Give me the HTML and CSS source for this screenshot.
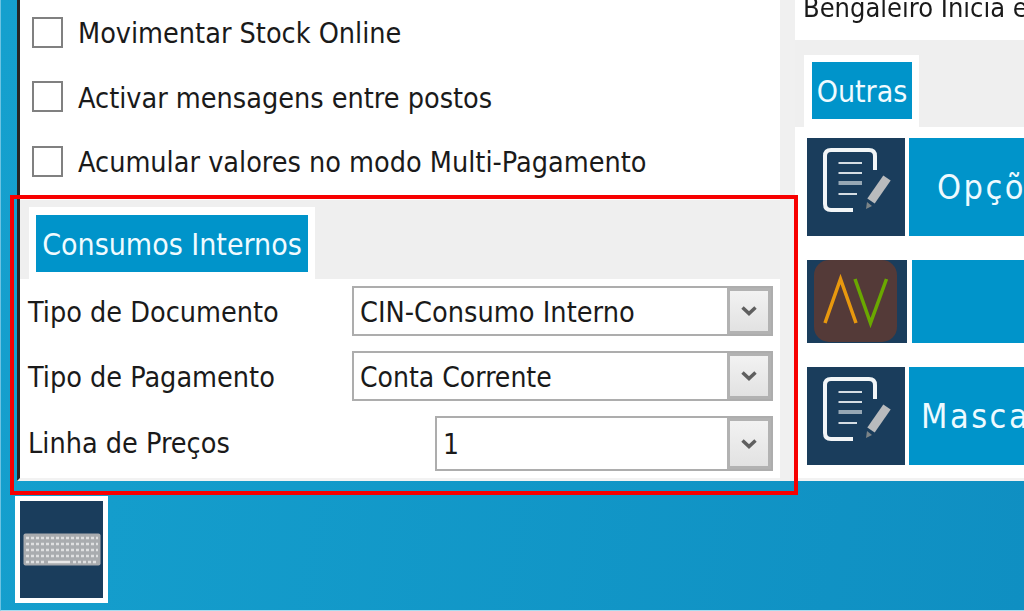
FILE: index.html
```html
<!DOCTYPE html>
<html lang="pt">
<head>
<meta charset="utf-8">
<title>Consumos Internos</title>
<link rel="stylesheet" href="styles.css">
</head>
<body>
<div class="stage">
  <div class="main">
    <section class="left">
      <div class="checks">
        <label class="check"><span class="box"></span><span class="check-text">Movimentar Stock Online</span></label>
        <label class="check"><span class="box"></span><span class="check-text">Activar mensagens entre postos</span></label>
        <label class="check"><span class="box"></span><span class="check-text">Acumular valores no modo Multi-Pagamento</span></label>
      </div>
      <div class="tabbar tabbar-left">
        <div class="tab"><span class="tab-label">Consumos Internos</span></div>
      </div>
      <div class="form">
        <div class="form-row row-1">
          <span class="field-label">Tipo de Documento</span>
          <div class="select"><span class="select-value value-doc">CIN-Consumo Interno</span><span class="select-btn"><svg width="18" height="12" viewBox="0 0 18 12"><path d="M2.500 2.500 9 8.500 15.500 2.500" fill="none" stroke="#5f5f5f" stroke-width="3.500"/></svg></span></div>
        </div>
        <div class="form-row row-2">
          <span class="field-label">Tipo de Pagamento</span>
          <div class="select"><span class="select-value">Conta Corrente</span><span class="select-btn"><svg width="18" height="12" viewBox="0 0 18 12"><path d="M2.500 2.500 9 8.500 15.500 2.500" fill="none" stroke="#5f5f5f" stroke-width="3.500"/></svg></span></div>
        </div>
        <div class="form-row row-3">
          <span class="field-label">Linha de Preços</span>
          <div class="select select-short"><span class="select-value">1</span><span class="select-btn"><svg width="18" height="12" viewBox="0 0 18 12"><path d="M2.500 2.500 9 8.500 15.500 2.500" fill="none" stroke="#5f5f5f" stroke-width="3.500"/></svg></span></div>
        </div>
      </div>
    </section>
    <div class="gutter"></div>
    <section class="right">
      <div class="top-note"><span>Bengaleiro Inicia e</span></div>
      <div class="tabbar tabbar-right">
        <div class="tab"><span class="tab-label">Outras</span></div>
      </div>
      <div class="actions">
        <div class="action action-1">
          <span class="tile"><svg width="98" height="98" viewBox="0 0 98 98"><use href="#doc"/></svg></span>
          <span class="action-btn"><span class="action-text text-1">Opções</span></span>
        </div>
        <div class="action action-2">
          <span class="tile tile-av">
            <svg width="100" height="83" viewBox="0 0 100 83">
              <rect x="7" y="0" width="83" height="82" rx="15" fill="#543a38"/>
              <path d="M18 63 33.500 19 49 63" fill="none" stroke="#e8980e" stroke-width="3.500"/>
              <path d="M48 19 63.500 63 79.500 19" fill="none" stroke="#6aa800" stroke-width="3.500"/>
            </svg>
          </span>
          <span class="action-btn"></span>
        </div>
        <div class="action action-3">
          <span class="tile"><svg width="98" height="98" viewBox="0 0 98 98"><use href="#doc"/></svg></span>
          <span class="action-btn"><span class="action-text text-3">Mascaras</span></span>
        </div>
      </div>
    </section>
  </div>
  <div class="footer">
    <div class="kbd-btn">
      <svg width="78" height="33" viewBox="0 0 78 33">
        <rect x="0.500" y="0.500" width="77" height="32" rx="2" fill="#a9acaf"/>
        <g fill="none" stroke="#dfe0e1" stroke-width="2.500" stroke-dasharray="3 2">
          <path d="M3 5H75"/><path d="M3 11H75"/><path d="M3 17H75"/><path d="M3 23H75"/>
          <path d="M3 29H22"/><path d="M50 29H75"/>
        </g>
        <path d="M25 29H47" stroke="#e8e8e8" stroke-width="2.500"/>
      </svg>
    </div>
  </div>
</div>
<div class="highlight"></div>
<svg class="defs" width="0" height="0" aria-hidden="true">
  <defs>
    <g id="doc">
      <path d="M46 72H24Q18 72 18 66V18Q18 12 24 12H62Q68 12 68 18V32" fill="none" stroke="#f2f5f7" stroke-width="4"/>
      <path d="M31.500 25H55M31.500 35H55M31.500 56H50" fill="none" stroke="#d5dde3" stroke-width="2"/>
      <path d="M31.500 45H55" fill="none" stroke="#97a8b5" stroke-width="4"/>
      <path d="M80 40 64 63" fill="none" stroke="#b9bbbd" stroke-width="9"/>
      <path d="M60 64 59 71 65 68Z" fill="#7c8487"/>
    </g>
  </defs>
</svg>
</body>
</html>
```

FILE: styles.css
```css
* { box-sizing: border-box; }
html, body { margin: 0; padding: 0; }
body {
  width: 1024px;
  height: 611px;
  overflow: hidden;
  position: relative;
  font-family: "DejaVu Sans Condensed", "Noto Sans", sans-serif;
  font-size: 28px;
  color: #1a1a1a;
  background: linear-gradient(100deg, #15a0ce 0%, #0f8fc2 100%);
  border-left: 1px solid #6cc3e2;
  border-bottom: 1px solid #a8dcef;
}
.stage { display: flex; flex-direction: column; height: 610px; margin-left: -1px; filter: blur(0.45px); }
.main { display: flex; height: 481px; padding-left: 17px; }
.left { width: 763px; height: 100%; background: #fff; border-left: 3px solid #262626; border-bottom: 3px solid #f2f2f2; display: flex; flex-direction: column; }
.checks { height: 200px; padding: 0 0 0 12px; display: flex; flex-direction: column; }
.check { height: 64.500px; display: flex; align-items: center; gap: 15px; white-space: nowrap; }
.check-text { font-size: 28.500px; padding-top: 3px; }
.box { width: 31px; height: 31px; border: 2px solid #808080; background: #fff; flex: none; }
.tabbar { background: #efefef; display: flex; align-items: flex-end; }
.tabbar-left { height: 79px; padding-left: 9px; }
.tab { background: #fff; }
.tabbar-left .tab { padding: 8px 7px 7px; }
.tab-label { display: block; background: #0094ca; color: #f0fbff; text-align: center; font-size: 30px; }
.tabbar-left .tab-label { width: 272px; height: 57px; line-height: 59px; white-space: nowrap; }
.form { height: 199px; padding: 7px 7px 0 8px; display: flex; flex-direction: column; gap: 15px; }
.form-row { display: flex; align-items: center; justify-content: space-between; }
.field-label { padding-top: 2px; font-size: 28.500px; }
.row-3 .field-label { padding-top: 0; }
.select { width: 421px; height: 50px; border: 2px solid #adadad; display: flex; background: #fff; }
.select-short { width: 338px; height: 55px; }
.select-value { flex: 1; padding: 2px 0 0 6px; align-self: center; }
.value-doc { font-size: 28.600px; }
.select-btn { width: 44px; border: 3px solid #b2b2b2; background: linear-gradient(#f2f2f2, #e2e2e2); display: flex; align-items: center; justify-content: center; }
.gutter { width: 15px; height: 481px; background: #f0f0f0; }
.right { flex: 1; min-width: 0; height: 100%; display: flex; flex-direction: column; overflow: hidden; }
.top-note { height: 40px; background: #fff; padding-left: 8px; overflow: hidden; white-space: nowrap; line-height: 26px; font-size: 27px; }
.top-note span { display: block; margin-top: -5px; }
.tabbar-right { height: 87px; padding-left: 9px; }
.tabbar-right .tab { padding: 7px 7px 8px 8px; }
.tabbar-right .tab-label { width: 100px; height: 57px; line-height: 59px; }
.actions { height: 354px; background: #fff; padding: 11px 0 0 12px; border-bottom: 3px solid #f2f2f2; display: flex; flex-direction: column; gap: 24px; }
.action { display: flex; gap: 4px; }
.action-1, .action-3 { height: 98px; }
.action-2 { height: 83px; gap: 5px; }
.tile { width: 98px; background: #1a3d5c; flex: none; display: block; }
.tile svg { display: block; }
.tile-av { width: 100px; }
.action-btn { flex: 1; background: #0094ca; color: #eefaff; display: flex; align-items: center; overflow: hidden; white-space: nowrap; font-size: 34px; letter-spacing: 2.500px; }
.text-1 { padding-left: 28px; }
.text-3 { padding-left: 12px; }
.footer { padding: 15px 0 0 15px; }
.kbd-btn { width: 93px; height: 107px; background: #1a3d5c; border: 5px solid #fff; display: flex; align-items: center; justify-content: center; }
.highlight { position: absolute; left: 9px; top: 195px; width: 788px; height: 300px; border: 4px solid #f70000; pointer-events: none; }
.defs { position: absolute; }
```
